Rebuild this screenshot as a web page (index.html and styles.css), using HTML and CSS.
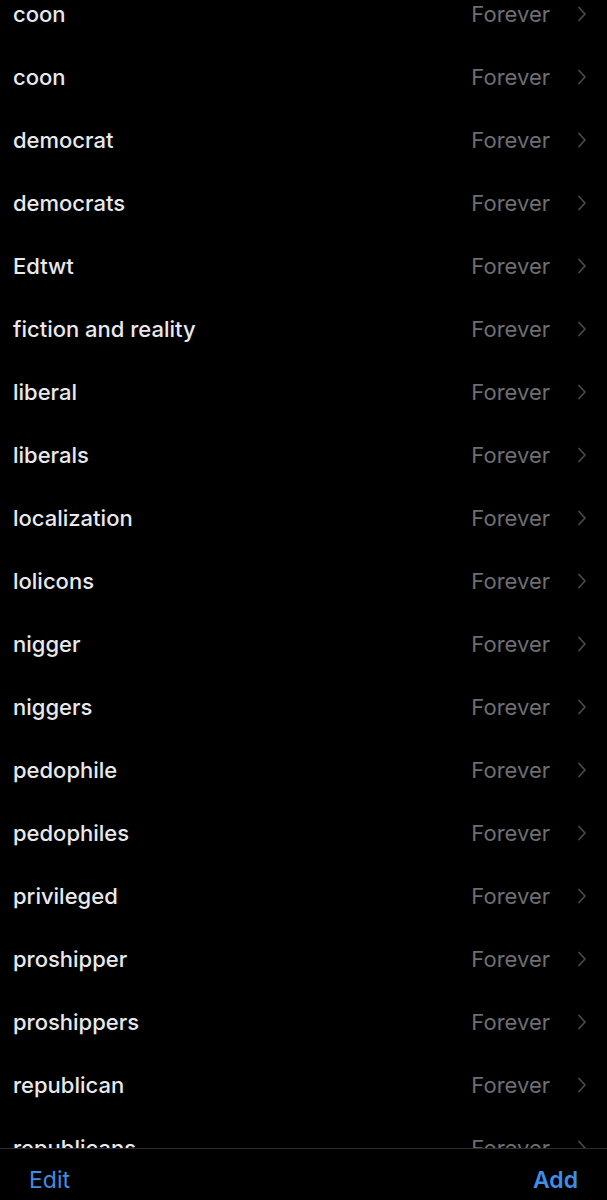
FILE: index.html
```html
<!DOCTYPE html>
<html lang="en">
<head>
  <meta charset="UTF-8">
  <title>Muted words</title>
  <link rel="stylesheet" href="styles.css">
</head>
<body>

<div class="screen">
  <ul class="word-list">
    <li class="row"><span class="word">coon</span><span class="duration">Forever</span><svg class="chevron" viewBox="0 0 10 16"><path d="M2 1.5 L8 8 L2 14.5"/></svg></li>
    <li class="row"><span class="word">coon</span><span class="duration">Forever</span><svg class="chevron" viewBox="0 0 10 16"><path d="M2 1.5 L8 8 L2 14.5"/></svg></li>
    <li class="row"><span class="word">democrat</span><span class="duration">Forever</span><svg class="chevron" viewBox="0 0 10 16"><path d="M2 1.5 L8 8 L2 14.5"/></svg></li>
    <li class="row"><span class="word">democrats</span><span class="duration">Forever</span><svg class="chevron" viewBox="0 0 10 16"><path d="M2 1.5 L8 8 L2 14.5"/></svg></li>
    <li class="row"><span class="word">Edtwt</span><span class="duration">Forever</span><svg class="chevron" viewBox="0 0 10 16"><path d="M2 1.5 L8 8 L2 14.5"/></svg></li>
    <li class="row"><span class="word">fiction and reality</span><span class="duration">Forever</span><svg class="chevron" viewBox="0 0 10 16"><path d="M2 1.5 L8 8 L2 14.5"/></svg></li>
    <li class="row"><span class="word">liberal</span><span class="duration">Forever</span><svg class="chevron" viewBox="0 0 10 16"><path d="M2 1.5 L8 8 L2 14.5"/></svg></li>
    <li class="row"><span class="word">liberals</span><span class="duration">Forever</span><svg class="chevron" viewBox="0 0 10 16"><path d="M2 1.5 L8 8 L2 14.5"/></svg></li>
    <li class="row"><span class="word">localization</span><span class="duration">Forever</span><svg class="chevron" viewBox="0 0 10 16"><path d="M2 1.5 L8 8 L2 14.5"/></svg></li>
    <li class="row"><span class="word">lolicons</span><span class="duration">Forever</span><svg class="chevron" viewBox="0 0 10 16"><path d="M2 1.5 L8 8 L2 14.5"/></svg></li>
    <li class="row"><span class="word">nigger</span><span class="duration">Forever</span><svg class="chevron" viewBox="0 0 10 16"><path d="M2 1.5 L8 8 L2 14.5"/></svg></li>
    <li class="row"><span class="word">niggers</span><span class="duration">Forever</span><svg class="chevron" viewBox="0 0 10 16"><path d="M2 1.5 L8 8 L2 14.5"/></svg></li>
    <li class="row"><span class="word">pedophile</span><span class="duration">Forever</span><svg class="chevron" viewBox="0 0 10 16"><path d="M2 1.5 L8 8 L2 14.5"/></svg></li>
    <li class="row"><span class="word">pedophiles</span><span class="duration">Forever</span><svg class="chevron" viewBox="0 0 10 16"><path d="M2 1.5 L8 8 L2 14.5"/></svg></li>
    <li class="row"><span class="word">privileged</span><span class="duration">Forever</span><svg class="chevron" viewBox="0 0 10 16"><path d="M2 1.5 L8 8 L2 14.5"/></svg></li>
    <li class="row"><span class="word">proshipper</span><span class="duration">Forever</span><svg class="chevron" viewBox="0 0 10 16"><path d="M2 1.5 L8 8 L2 14.5"/></svg></li>
    <li class="row"><span class="word">proshippers</span><span class="duration">Forever</span><svg class="chevron" viewBox="0 0 10 16"><path d="M2 1.5 L8 8 L2 14.5"/></svg></li>
    <li class="row"><span class="word">republican</span><span class="duration">Forever</span><svg class="chevron" viewBox="0 0 10 16"><path d="M2 1.5 L8 8 L2 14.5"/></svg></li>
    <li class="row"><span class="word">republicans</span><span class="duration">Forever</span><svg class="chevron" viewBox="0 0 10 16"><path d="M2 1.5 L8 8 L2 14.5"/></svg></li>
  </ul>

  <div class="toolbar">
    <span class="toolbar-btn">Edit</span>
    <span class="toolbar-btn bold">Add</span>
  </div>
</div>

</body>
</html>
```

FILE: styles.css
```css
html, body {
  margin: 0;
  padding: 0;
  background-color: #000;
}
body {
  font-family: Inter, "Liberation Sans", sans-serif;
}
.screen {
  display: flex;
  flex-direction: column;
  height: 1200px;
  overflow: hidden;
}
.word-list {
  list-style: none;
  margin: 0;
  padding: 0;
  height: 1148px;
  overflow: hidden;
  flex-shrink: 0;
}
.row {
  display: flex;
  align-items: center;
  height: 63px;
  padding: 0 20px 0 13px;
}
.row:first-child {
  margin-top: -18px;
}
.word {
  flex: 1;
  color: #e9e9eb;
  font-size: 22px;
  font-weight: 500;
}
.duration {
  color: #6e6e73;
  font-size: 22px;
  margin-right: 27px;
}
.chevron {
  width: 10px;
  height: 16px;
  fill: none;
  stroke: #48484a;
  stroke-width: 1.8;
  stroke-linecap: round;
  stroke-linejoin: round;
}
.toolbar {
  flex: 1;
  display: flex;
  justify-content: space-between;
  align-items: center;
  border-top: 1px solid #2c2c2e;
  padding: 10px 29px 0 29px;
}
.toolbar-btn {
  color: #3d8ee4;
  font-size: 23px;
}
.toolbar-btn.bold {
  font-weight: 600;
}
```
